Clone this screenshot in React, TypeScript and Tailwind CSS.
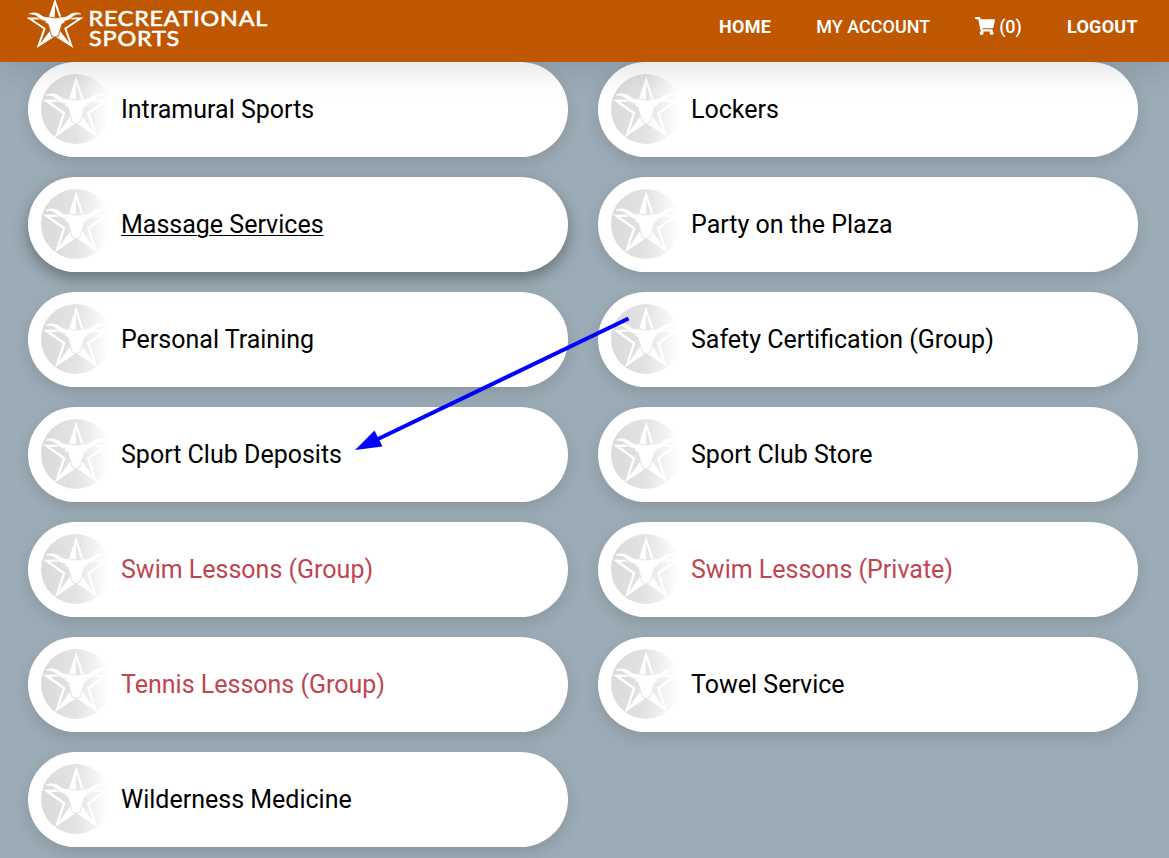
import React from "react";
import { FaShoppingCart } from "react-icons/fa";

type Item = { label: string; full?: boolean; hovered?: boolean };

const items: Item[] = [
  { label: "Intramural Sports" },
  { label: "Lockers" },
  { label: "Massage Services", hovered: true },
  { label: "Party on the Plaza" },
  { label: "Personal Training" },
  { label: "Safety Certification (Group)" },
  { label: "Sport Club Deposits" },
  { label: "Sport Club Store" },
  { label: "Swim Lessons (Group)", full: true },
  { label: "Swim Lessons (Private)", full: true },
  { label: "Tennis Lessons (Group)", full: true },
  { label: "Towel Service" },
  { label: "Wilderness Medicine" },
];

const HORNS =
  "M5 21.2 C10 18.8 15 19.800 18.500 22.500 C21.500 25 24 25.800 28.500 25.600 C33 27.200 37.500 27.200 42 25.600 C46.500 25.800 49 25 52 22.500 C55.500 19.800 60.500 18.800 65.500 21.200 C60.500 21 57.500 22 55 24.800 C52 28 49 29.200 44.500 29.400 L46.500 31 L42.500 33.500 C42 38 39.800 41.500 39.300 45.500 C39 49.800 31.500 49.800 31.200 45.500 C30.700 41.500 28.500 38 28 33.500 L24 31 L26 29.400 C21.500 29.200 18.500 28 15.500 24.800 C13 22 10 21 5 21.200 Z";

/* Longhorn head over a faceted star, drawn on a 70 x 70 grid */
function LonghornStar({ id }: { id: string }) {
  return (
    <g fill="#fff">
      <mask id={id} maskUnits="userSpaceOnUse" x="0" y="0" width="70" height="70">
        <rect width="70" height="70" fill="#fff" />
        <path d={HORNS} fill="#000" stroke="#000" strokeWidth="2.4" />
      </mask>
      <g mask={`url(#${id})`}>
        <path
          d="M35.200 6 L41.800 26.500 L65 26.800 L47.300 39.200 L54.300 60.500 L35.200 47.500 L16.100 60.500 L23.100 39.200 L5.500 26.800 L28.700 26.500 Z"
          fill="none"
          stroke="#fff"
          strokeWidth="2.3"
          strokeMiterlimit="8"
        />
        <path d="M35.200 5 L35 26 L28.500 26 Z" />
        <path d="M15.500 61.500 L29.500 42 L35.200 47.500 Z" />
        <path d="M54.900 61.500 L41 42 L35.200 47.500 Z" />
      </g>
      <path d={HORNS} stroke="#fff" strokeWidth="0.6" strokeLinejoin="round" />
    </g>
  );
}

function Badge({ id }: { id: string }) {
  return (
    <svg viewBox="0 0 70 70" className="-mt-px size-[70px] shrink-0" aria-hidden="true">
      <defs>
        <linearGradient id={id}>
          <stop offset="0" stopColor="#dadada" />
          <stop offset="0.5" stopColor="#e3e3e3" />
          <stop offset="0.97" stopColor="#ffffff" />
        </linearGradient>
      </defs>
      <circle cx="35" cy="35" r="35" fill={`url(#${id})`} />
      <LonghornStar id={`${id}-star`} />
    </svg>
  );
}

function Logo() {
  return (
    <svg viewBox="0 0 242 50" className="h-[50px] w-[242px]" role="img">
      <g transform="translate(-2.300 -3.200) scale(0.86 0.81)">
        <LonghornStar id="logo-star" />
      </g>
      <g fill="#fff" fontFamily="Lato, sans-serif" fontSize="20.500" stroke="#fff" strokeWidth="0.6" letterSpacing="0.7">
        <text x="61.500" y="26.300" textLength="179.500" lengthAdjust="spacingAndGlyphs">RECREATIONAL</text>
        <text x="62" y="46.300" textLength="91" lengthAdjust="spacingAndGlyphs">SPORTS</text>
      </g>
    </svg>
  );
}

export default function App() {
  return (
    <div className="relative h-[858px] w-full overflow-hidden bg-[#9cacb6] font-[Roboto,sans-serif]">
      <header className="relative z-10 flex h-[62px] items-start justify-between bg-[#bf5700] pl-[27px] pr-[31px] shadow-[0_10px_30px_rgba(0,0,0,0.11)]">
        <Logo />
        <nav className="flex items-center pt-[13px] text-[18px] leading-[27px] text-white">
          <a className="font-bold tracking-[0.3px]">HOME</a>
          <a className="ml-[45px] font-medium">MY ACCOUNT</a>
          <a className="ml-[45px] flex items-center gap-[4px] font-medium">
            <FaShoppingCart className="-mt-px size-5" />
            <span>(0)</span>
          </a>
          <a className="ml-[45px] font-bold tracking-[0.3px]">LOGOUT</a>
        </nav>
      </header>
      <main className="grid grid-cols-[540px_540px] gap-x-[30px] gap-y-5 pl-7">
        {items.map((item, i) => (
          <a
            key={item.label}
            className={`flex h-[95px] items-center gap-[10px] rounded-full bg-white pl-[13px] ${
              item.hovered
                ? "shadow-[0_6px_16px_rgba(0,0,0,0.35)]"
                : "shadow-[0_6px_16px_rgba(0,0,0,0.13)]"
            }`}
          >
            <Badge id={`badge-${i}`} />
            <span
              className={`text-[25px] leading-[30px] ${item.full ? "text-[#bf4550]" : "text-black"} ${
                item.hovered ? "underline decoration-1 underline-offset-2" : ""
              }`}
            >
              {item.label}
            </span>
          </a>
        ))}
      </main>
      <svg viewBox="0 0 274 132" className="absolute left-[355px] top-[318px] z-20 h-[132px] w-[274px] overflow-visible" aria-hidden="true">
        <path d="M273.500 0.500 L22 121.500" stroke="#00f" strokeWidth="4" fill="none" />
        <path d="M0 132 L19.500 112.500 L27.500 128.500 Z" fill="#00f" />
      </svg>
    </div>
  );
}
